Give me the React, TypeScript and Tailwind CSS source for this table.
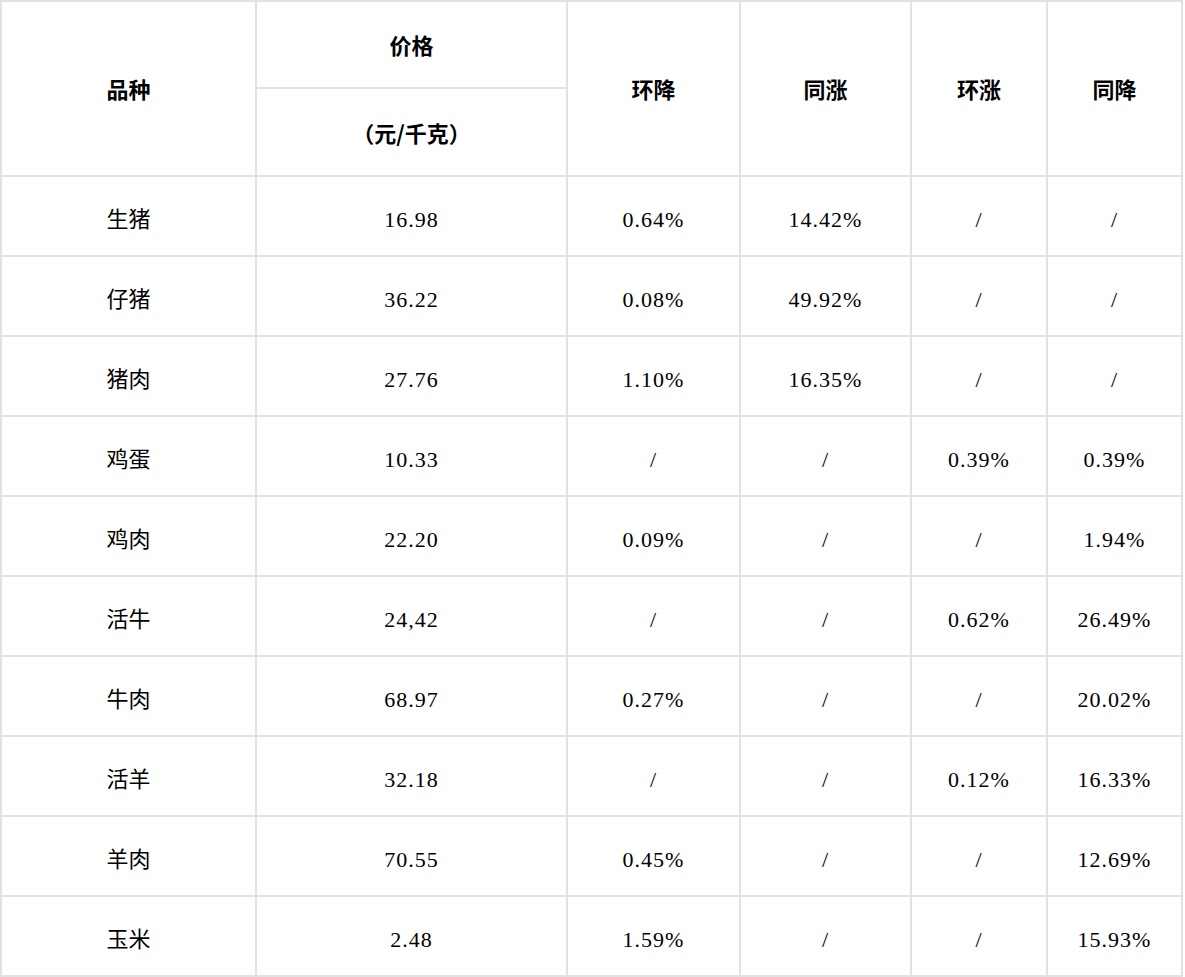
const rows: [string, string, string, string, string, string][] = [
  ["生猪", "16.98", "0.64%", "14.42%", "/", "/"],
  ["仔猪", "36.22", "0.08%", "49.92%", "/", "/"],
  ["猪肉", "27.76", "1.10%", "16.35%", "/", "/"],
  ["鸡蛋", "10.33", "/", "/", "0.39%", "0.39%"],
  ["鸡肉", "22.20", "0.09%", "/", "/", "1.94%"],
  ["活牛", "24,42", "/", "/", "0.62%", "26.49%"],
  ["牛肉", "68.97", "0.27%", "/", "/", "20.02%"],
  ["活羊", "32.18", "/", "/", "0.12%", "16.33%"],
  ["羊肉", "70.55", "0.45%", "/", "/", "12.69%"],
  ["玉米", "2.48", "1.59%", "/", "/", "15.93%"],
];

const headFont = "font-['Noto_Sans_CJK_SC',sans-serif] font-bold text-[22px] text-black";
const bodyFont = "font-['Liberation_Serif','Noto_Sans_CJK_SC',serif] text-[22px] text-black tracking-[1px] pt-[6px]";
const nameFont = "font-['Noto_Sans_CJK_SC',sans-serif] text-[22px] text-black pt-[2px]";

export default function App() {
  return (
    <div className="w-[1185px] h-[977px] bg-white">
      <div className="grid w-[1183px] grid-cols-[253px_309px_171px_169px_134px_133px] grid-rows-[85px_86px_repeat(10,78px)] gap-[2px] bg-[#e2e2e2] p-[2px]">
        <div className={`row-span-2 flex items-center justify-center bg-white ${headFont}`}>品种</div>
        <div className={`flex items-center justify-center bg-white ${headFont}`}>价格</div>
        <div className={`row-span-2 flex items-center justify-center bg-white ${headFont}`}>环降</div>
        <div className={`row-span-2 flex items-center justify-center bg-white ${headFont}`}>同涨</div>
        <div className={`row-span-2 flex items-center justify-center bg-white ${headFont}`}>环涨</div>
        <div className={`row-span-2 flex items-center justify-center bg-white ${headFont}`}>同降</div>
        <div className={`col-start-2 flex items-center justify-center bg-white ${headFont}`}>（元/千克）</div>

        {rows.map((r) =>
          r.map((cell, i) => (
            <div
              key={r[0] + i}
              className={`flex items-center justify-center bg-white ${i === 0 ? nameFont : bodyFont}`}
            >
              {cell}
            </div>
          ))
        )}
      </div>
    </div>
  );
}
